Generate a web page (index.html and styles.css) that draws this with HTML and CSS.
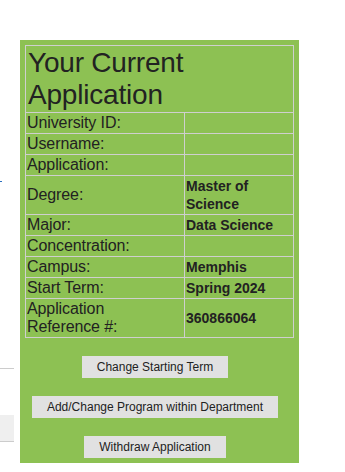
FILE: index.html
```html
<!DOCTYPE html>
<html lang="en">
<head>
<meta charset="utf-8">
<title>Your Current Application</title>
<link rel="stylesheet" href="styles.css">
</head>
<body>
<div class="page">
  <aside class="side">
    <span class="dot"></span>
    <span class="rule"></span>
    <span class="stub"></span>
  </aside>
  <section class="panel">
    <table class="app">
      <colgroup><col class="c-label"><col class="c-value"></colgroup>
      <tr><th colspan="2">Your Current Application</th></tr>
      <tr><td>University ID:</td><td></td></tr>
      <tr><td>Username:</td><td></td></tr>
      <tr><td>Application:</td><td></td></tr>
      <tr><td>Degree:</td><td class="val">Master of Science</td></tr>
      <tr><td>Major:</td><td class="val">Data Science</td></tr>
      <tr><td>Concentration:</td><td></td></tr>
      <tr><td>Campus:</td><td class="val">Memphis</td></tr>
      <tr><td>Start Term:</td><td class="val">Spring 2024</td></tr>
      <tr><td>Application<br>Reference #:</td><td class="val">360866064</td></tr>
    </table>
    <div class="actions">
      <button class="btn" type="button">Change Starting Term</button>
      <button class="btn" type="button">Add/Change Program within Department</button>
      <button class="btn" type="button">Withdraw Application</button>
    </div>
  </section>
</div>
</body>
</html>
```
FILE: styles.css
```css
html, body {
  margin: 0;
  padding: 0;
  background: #ffffff;
}

body {
  font-family: "Liberation Sans", Arial, sans-serif;
  color: #222222;
}

.page {
  display: flex;
  align-items: flex-start;
}

.side {
  width: 14px;
  display: flex;
  flex-direction: column;
}

.dot {
  display: block;
  width: 2px;
  height: 1px;
  margin-top: 181px;
  background: #2a6fbf;
}

.rule {
  display: block;
  height: 1px;
  margin-top: 186px;
  background: #cccccc;
}

.stub {
  display: block;
  height: 26px;
  margin-top: 46px;
  background: #efefef;
  border-bottom: 1px solid #cccccc;
}

.panel {
  margin-top: 40px;
  margin-left: 6px;
  width: 269px;
  padding: 5px;
  background: #8dc153;
}

.app {
  width: 269px;
  border-collapse: collapse;
  table-layout: fixed;
  border: 1px solid #cfcfcf;
}

.c-label { width: 159px; }

.app th,
.app td {
  border: 1px solid #cfcfcf;
  padding: 1px;
  vertical-align: middle;
  text-align: left;
}

.app th {
  font-size: 28px;
  font-weight: normal;
  line-height: 32px;
  letter-spacing: -0.2px;
  padding: 1px 2px;
}

.app td {
  font-size: 16px;
  line-height: 18px;
  letter-spacing: -0.1px;
}

.app td.val {
  font-size: 14px;
  font-weight: bold;
  line-height: 18px;
  letter-spacing: 0;
}

.actions {
  display: flex;
  flex-direction: column;
  align-items: center;
  gap: 18px;
  margin-top: 18px;
  padding-right: 9px;
}

.btn {
  font-family: "Liberation Sans", Arial, sans-serif;
  font-size: 12px;
  line-height: 14px;
  color: #222222;
  background: #e1e1e1;
  border: 0;
  padding: 4px 15px;
  margin: 0;
}
```
